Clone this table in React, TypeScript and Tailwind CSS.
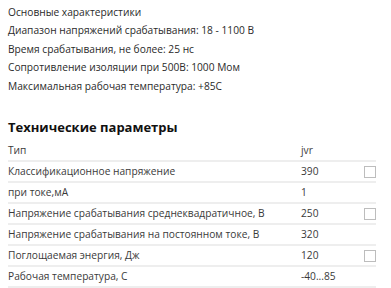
const rows: { label: string; value: string; check?: boolean }[] = [
  { label: 'Классификационное напряжение', value: '390', check: true },
  { label: 'при токе,мА', value: '1' },
  { label: 'Напряжение срабатывания среднеквадратичное, В', value: '250', check: true },
  { label: 'Напряжение срабатывания на постоянном токе, В', value: '320' },
  { label: 'Поглощаемая энергия, Дж', value: '120', check: true },
  { label: 'Рабочая температура, С', value: '-40...85' },
];

export default function App() {
  return (
    <div className="w-[391px] h-[288px] overflow-hidden bg-white pl-2 pt-[3px] font-['Open_Sans',sans-serif] text-[10.2px] text-[#2a2a2a]">
      <div className="leading-[18.4px]">
        <div>Основные характеристики</div>
        <div>Диапазон напряжений срабатывания: 18 - 1100 В</div>
        <div>Время срабатывания, не более: 25 нс</div>
        <div>Сопротивление изоляции при 500В: 1000 Мом</div>
        <div>Максимальная рабочая температура: +85С</div>
      </div>
      <h2 className="mt-[23px] text-[13px] font-bold leading-[18px] text-[#111]">Технические параметры</h2>
      <div className="mt-[5px] w-[368px] text-[#3a3a3a]">
        <div className="flex h-[21px] items-center border-b-2 border-[#eeeeee]">
          <div className="w-[293px]">Тип</div>
          <div className="flex-1">jvr</div>
        </div>
        {rows.map((r) => (
          <div key={r.label} className="flex h-[21px] items-center border-b-2 border-[#eeeeee]">
            <div className="w-[293px] whitespace-nowrap">{r.label}</div>
            <div className="flex-1">{r.value}</div>
            {r.check && <div className="h-[12px] w-[12px] border border-[#bdbdbd] bg-white" />}
          </div>
        ))}
      </div>
    </div>
  );
}
